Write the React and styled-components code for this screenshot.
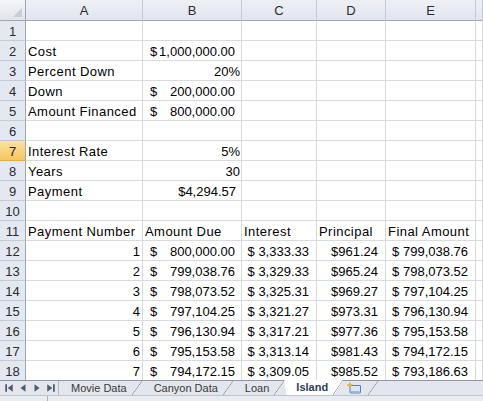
import React from "react";
import styled, { createGlobalStyle, css } from "styled-components";

const GlobalStyle = createGlobalStyle`
  html, body {
    margin: 0;
    padding: 0;
    background: #ffffff;
    overflow: hidden;
  }
  * {
    box-sizing: border-box;
  }
`;

const COLS = ["A", "B", "C", "D", "E", ""];

// each cell: [kind, value] — kind: t = text, n = right aligned, a = accounting ($ left, number right)
const ROWS = [
  [],
  [["t", "Cost"], ["a", "1,000,000.00"]],
  [["t", "Percent Down"], ["n", "20%", 1]],
  [["t", "Down"], ["a", "200,000.00"]],
  [["t", "Amount Financed"], ["a", "800,000.00"]],
  [],
  [["t", "Interest Rate"], ["n", "5%", 1]],
  [["t", "Years"], ["n", "30", 1]],
  [["t", "Payment"], ["n", "$4,294.57", 5]],
  [],
  [
    ["t", "Payment Number"],
    ["t", "Amount Due"],
    ["t", "Interest"],
    ["t", "Principal"],
    ["t", "Final Amount"],
  ],
  ...[
    ["1", "800,000.00", "3,333.33", "961.24", "799,038.76"],
    ["2", "799,038.76", "3,329.33", "965.24", "798,073.52"],
    ["3", "798,073.52", "3,325.31", "969.27", "797,104.25"],
    ["4", "797,104.25", "3,321.27", "973.31", "796,130.94"],
    ["5", "796,130.94", "3,317.21", "977.36", "795,153.58"],
    ["6", "795,153.58", "3,313.14", "981.43", "794,172.15"],
    ["7", "794,172.15", "3,309.05", "985.52", "793,186.63"],
  ].map(([n, due, interest, principal, final]) => [
    ["n", n, 2],
    ["a", due],
    ["n", "$ " + interest, 7],
    ["n", "$" + principal, 7],
    ["n", "$ " + final, 7],
  ]),
];

const ACTIVE_ROW = 7;

const TABS = ["Movie Data", "Canyon Data", "Loan", "Island"];
const ACTIVE_TAB = "Island";

const App = () => {
  return (
    <>
      <GlobalStyle />
      <Window>
        <Grid>
          <Corner />
          {COLS.map((c, i) => (
            <ColHead key={"h" + i}>{c}</ColHead>
          ))}
          {ROWS.map((row, r) => (
            <React.Fragment key={r}>
              <RowHead $active={r + 1 === ACTIVE_ROW}>{r + 1}</RowHead>
              {COLS.map((_, c) => {
                const cell = row[c];
                if (!cell) return <Cell key={c} />;
                const [kind, value, pad] = cell;
                if (kind === "a") {
                  return (
                    <Cell key={c} $kind="a">
                      <span>$</span>
                      <span>{value}</span>
                    </Cell>
                  );
                }
                return (
                  <Cell key={c} $kind={kind} $pad={pad}>
                    {value}
                  </Cell>
                );
              })}
            </React.Fragment>
          ))}
        </Grid>
        <TabBar>
          <NavButtons>
            <NavIcon viewBox="0 0 8 8">
              <rect x="1" y="1" width="1.4" height="6" />
              <path d="M7 1 L3 4 L7 7 Z" />
            </NavIcon>
            <NavIcon viewBox="0 0 8 8">
              <path d="M6 1 L2 4 L6 7 Z" />
            </NavIcon>
            <NavIcon viewBox="0 0 8 8">
              <path d="M2 1 L6 4 L2 7 Z" />
            </NavIcon>
            <NavIcon viewBox="0 0 8 8">
              <path d="M1 1 L5 4 L1 7 Z" />
              <rect x="5.6" y="1" width="1.4" height="6" />
            </NavIcon>
          </NavButtons>
          {TABS.map((t) => (
            <SheetTab key={t} $active={t === ACTIVE_TAB}>
              {t}
            </SheetTab>
          ))}
          <SheetTab $icon>
            <svg width="18" height="12" viewBox="0 0 18 12">
              <path
                d="M4 3.5 H14.5 V10 Q14.5 11 13.5 11 H5 Q4 11 4 10 Z"
                fill="#d9e6f6"
                stroke="#5b7fb5"
                strokeWidth="1"
              />
              <path d="M5 9.5 H13.5" stroke="#9fb7d9" strokeWidth="1" />
              <path
                d="M4 0.5 L4.9 2.6 L7 3 L4.9 3.6 L4 5.6 L3.1 3.6 L1 3 L3.1 2.6 Z"
                fill="#f6c431"
                stroke="#e09a12"
                strokeWidth="0.5"
              />
            </svg>
          </SheetTab>
          <TabRest />
        </TabBar>
        <StatusStrip>
          <StatusPart />
          <StatusPart $grow />
        </StatusStrip>
      </Window>
    </>
  );
};

export default App;

const Window = styled.div`
  display: flex;
  flex-direction: column;
  width: 483px;
  height: 401px;
  overflow: hidden;
  font-family: "Liberation Sans", Arial, sans-serif;
  color: #000000;
`;

const Grid = styled.div`
  display: grid;
  grid-template-columns: 26px 117px 99px 75px 69px 90px 1fr;
  grid-template-rows: 21px repeat(18, 20px);
  height: 380px;
  overflow: hidden;
  flex-shrink: 0;
`;

const headBase = css`
  display: flex;
  align-items: center;
  justify-content: center;
  font-size: 13px;
  color: #2b2b2b;
`;

const Corner = styled.div`
  position: relative;
  background: linear-gradient(#f4f5f8, #e1e4ea);
  border-right: 1px solid #9ea6b4;
  border-bottom: 1px solid #9ea6b4;

  &::after {
    content: "";
    position: absolute;
    right: 3px;
    bottom: 3px;
    width: 0;
    height: 0;
    border-left: 9px solid transparent;
    border-bottom: 9px solid #c8ccd5;
  }
`;

const ColHead = styled.div`
  ${headBase};
  padding-top: 1px;
  background: linear-gradient(#eef0f5, #e2e5ee);
  border-right: 1px solid #c4c9d4;
  border-bottom: 1px solid #9ea6b4;
`;

const RowHead = styled.div`
  ${headBase};
  padding-top: 1px;
  background: ${({ $active }) =>
    $active ? "linear-gradient(#fbe1a0, #f5c75f)" : "#e4e8f0"};
  border-right: 1px solid #9ea6b4;
  border-bottom: 1px solid ${({ $active }) => ($active ? "#e0ac4a" : "#c4c9d4")};
  color: ${({ $active }) => ($active ? "#1f1f1f" : "#2b2b2b")};
`;

const Cell = styled.div`
  display: flex;
  align-items: flex-end;
  min-width: 0;
  overflow: visible;
  white-space: nowrap;
  font-size: 13px;
  line-height: 15px;
  padding: 0 0 1px 0;
  border-right: 1px solid #d9dadc;
  border-bottom: 1px solid #d9dadc;

  ${({ $kind }) =>
    $kind === "t" &&
    css`
      padding-left: 2px;
      letter-spacing: 0.45px;
      position: relative;
      z-index: 1;
    `}

  ${({ $kind, $pad }) =>
    $kind === "n" &&
    css`
      justify-content: flex-end;
      padding-right: ${$pad}px;
    `}

  ${({ $kind }) =>
    $kind === "a" &&
    css`
      justify-content: space-between;
      padding-left: 7px;
      padding-right: 6px;
    `}
`;

const TabBar = styled.div`
  display: flex;
  align-items: stretch;
  height: 15px;
  flex-shrink: 0;
  background: #e3e6ec;
  border-top: 1px solid #8f97a6;
  font-size: 11px;
  color: #3a3a3a;
`;

const NavButtons = styled.div`
  display: flex;
  align-items: center;
  gap: 4px;
  width: 59px;
  padding-left: 4px;
  border-right: 1px solid #b4bac6;
`;

const NavIcon = styled.svg`
  width: 10px;
  height: 10px;
  fill: #4d5b70;
`;

const SheetTab = styled.div`
  position: relative;
  display: flex;
  align-items: center;
  padding: 0 15px 1px 12px;
  white-space: nowrap;
  background: ${({ $active }) => ($active ? "#ffffff" : "transparent")};
  font-weight: ${({ $active }) => ($active ? 700 : 400)};
  color: ${({ $active }) => ($active ? "#2d3f58" : "#3a3a3a")};
  clip-path: ${({ $active }) =>
    $active
      ? "polygon(0 0, 100% 0, calc(100% - 9px) 100%, 2px 100%)"
      : "none"};
  margin-top: ${({ $active }) => ($active ? "-1px" : "0")};

  ${({ $icon }) =>
    $icon &&
    css`
      padding: 0 14px 0 3px;
    `}

  &::after {
    content: "";
    position: absolute;
    top: 0;
    right: 0;
    bottom: 0;
    width: 10px;
    background: linear-gradient(
      to top left,
      transparent calc(50% - 0.6px),
      #8c95a5 50%,
      transparent calc(50% + 0.6px)
    );
  }
`;

const TabRest = styled.div`
  flex: 1;
`;

const StatusStrip = styled.div`
  display: flex;
  flex: 1;
  background: #e9ecf1;
  border-top: 1px solid #bfc5cf;
`;

const StatusPart = styled.div`
  width: ${({ $grow }) => ($grow ? "auto" : "48px")};
  flex: ${({ $grow }) => ($grow ? 1 : "none")};
  border-right: ${({ $grow }) => ($grow ? "none" : "1px solid #a9b0bc")};
`;
